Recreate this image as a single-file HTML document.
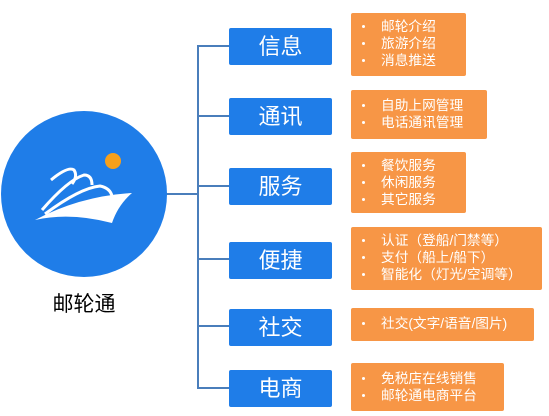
<!DOCTYPE html>
<html><head><meta charset="utf-8"><style>
body{margin:0;width:549px;height:416px;background:#fff;position:relative;overflow:hidden;font-family:"Liberation Sans","Noto Sans CJK SC",sans-serif}
.b{position:absolute;left:229px;width:103px;height:37px;background:#1f7de8;border-radius:2px;color:#fff;font-size:22px;line-height:37px;text-align:center}
.o{position:absolute;left:351px;background:#f79646;border-radius:2px;color:#fff;font-size:13.7px;line-height:17px;padding-top:5px;box-sizing:border-box}
.o div{position:relative;padding-left:30px;white-space:nowrap}
.o div:before{content:"";position:absolute;left:11px;top:7px;width:3px;height:3px;background:#fff;border-radius:50%}
.l{position:absolute;background:#4a7ebb}
</style></head><body>
<div class="l" style="left:197px;top:45px;width:2px;height:344px"></div>
<div class="l" style="left:166px;top:193px;width:32px;height:2px"></div>
<div class="l" style="left:197px;top:45px;width:32px;height:2px"></div>
<div class="l" style="left:197px;top:115px;width:32px;height:2px"></div>
<div class="l" style="left:197px;top:185px;width:32px;height:2px"></div>
<div class="l" style="left:197px;top:258px;width:32px;height:2px"></div>
<div class="l" style="left:197px;top:325px;width:32px;height:2px"></div>
<div class="l" style="left:197px;top:387px;width:32px;height:2px"></div>
<svg style="position:absolute;left:0;top:0" width="200" height="300">
<circle cx="84" cy="194" r="83" fill="#1f7de8"/>
<circle cx="113" cy="161" r="8" fill="#f7a01b"/>
<path d="M35 220 Q80 196 132 193 Q118 205 112 223 Q70 212 35 220Z" fill="#fff"/>
<path d="M51 180 Q68 166 74 170 Q78 176 72 184" stroke="#fff" stroke-width="3" fill="none"/>
<path d="M42 210 Q68 180 84 175 Q92 175 92 185" stroke="#fff" stroke-width="3" fill="none"/>
<path d="M45 214 Q80 188 100 186 Q110 188 112 196" stroke="#fff" stroke-width="3" fill="none"/>
</svg>
<div style="position:absolute;left:34px;top:288px;width:100px;text-align:center;font-size:21px;color:#000">邮轮通</div>
<div class="b" style="top:28px">信息</div>
<div class="b" style="top:98px">通讯</div>
<div class="b" style="top:168px">服务</div>
<div class="b" style="top:242px">便捷</div>
<div class="b" style="top:309px">社交</div>
<div class="b" style="top:370px">电商</div>
<div class="o" style="top:13px;width:115px;height:63px"><div>邮轮介绍</div><div>旅游介绍</div><div>消息推送</div></div>
<div class="o" style="top:90px;width:136px;height:49px;padding-top:7px"><div>自助上网管理</div><div>电话通讯管理</div></div>
<div class="o" style="top:152px;width:115px;height:61px"><div>餐饮服务</div><div>休闲服务</div><div>其它服务</div></div>
<div class="o" style="top:227px;width:191px;height:63px"><div>认证（登船/门禁等）</div><div>支付（船上/船下）</div><div>智能化（灯光/空调等）</div></div>
<div class="o" style="top:308px;width:183px;height:33px;padding-top:7px"><div>社交(文字/语音/图片)</div></div>
<div class="o" style="top:363px;width:153px;height:48px;padding-top:7px"><div>免税店在线销售</div><div>邮轮通电商平台</div></div>
</body></html>
